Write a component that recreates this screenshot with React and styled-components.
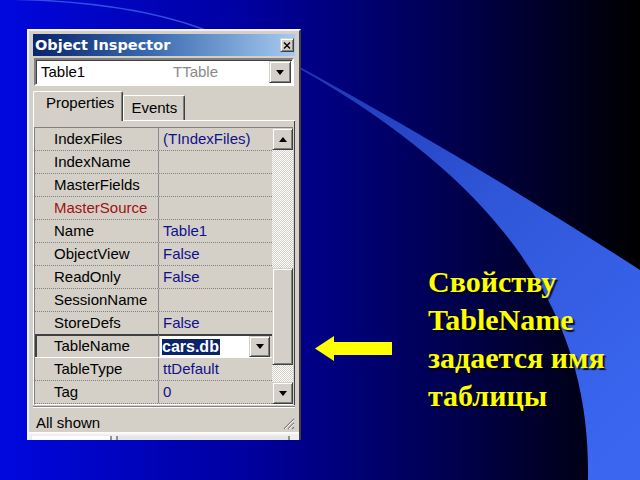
import React from 'react';
import styled, { createGlobalStyle } from 'styled-components';

const Global = createGlobalStyle`
  html, body { margin: 0; padding: 0; background: #000; }
  body { width: 640px; height: 480px; overflow: hidden; }
`;

const Slide = styled.div`
  position: relative;
  width: 640px;
  height: 480px;
  overflow: hidden;
  background: linear-gradient(to right, #0008de 0%, #00009c 40%, #000050 70%, #000000 100%);
  font-family: "Liberation Sans", Arial, sans-serif;
`;

const Backdrop = styled.svg`
  position: absolute;
  left: 0;
  top: 0;
`;

const Content = styled.div`
  position: relative;
  display: flex;
  align-items: flex-start;
  padding: 29px 0 0 27px;
  box-sizing: border-box;
  height: 100%;
`;

const Window = styled.div`
  width: 274px;
  height: 411px;
  box-sizing: border-box;
  flex-shrink: 0;
  background: #d4d0c8;
  border: 2px solid;
  border-color: #f4f4f4 #404040 #404040 #f4f4f4;
  border-bottom: none;
  padding: 3px 4px 0 4px;
  display: flex;
  flex-direction: column;
  overflow: hidden;
`;

const TitleBar = styled.div`
  height: 22px;
  flex-shrink: 0;
  display: flex;
  align-items: center;
  justify-content: space-between;
  padding: 0 1px 0 2px;
  background: linear-gradient(to right, #0a246a 0%, #3a6ab0 45%, #a6caf0 100%);
`;

const TitleText = styled.span`
  font-family: "DejaVu Sans", Verdana, sans-serif;
  font-weight: bold;
  font-size: 14.5px;
  color: #fff;
  white-space: nowrap;
`;

const RaisedBtn = styled.div`
  box-sizing: border-box;
  width: ${p => p.$w}px;
  height: ${p => p.$h}px;
  flex-shrink: 0;
  background: #d4d0c8;
  border: 1px solid;
  border-color: #d4d0c8 #404040 #404040 #d4d0c8;
  box-shadow: inset 1px 1px 0 #fff, inset -1px -1px 0 #808080;
  display: flex;
  align-items: center;
  justify-content: center;
`;

const Tri = styled.span`
  width: 0;
  height: 0;
  border-left: 4.5px solid transparent;
  border-right: 4.5px solid transparent;
  ${p => (p.$dir === 'up' ? 'border-bottom: 5px solid #000;' : 'border-top: 5px solid #000;')}
`;

const Combo = styled.div`
  margin: 2px 1px 0 1px;
  height: 28px;
  box-sizing: border-box;
  flex-shrink: 0;
  display: flex;
  align-items: stretch;
  background: #fff;
  border: 2px solid;
  border-color: #808080 #fff #fff #808080;
  box-shadow: inset 1px 1px 0 #404040;
  padding: 1px 1px 1px 0;
`;

const ComboText = styled.span`
  font-size: 15px;
  line-height: 22px;
  color: ${p => p.$muted ? '#8a8a8a' : '#000'};
  width: ${p => p.$w ? `${p.$w}px` : 'auto'};
  padding-left: ${p => p.$pl || 0}px;
  flex: ${p => p.$grow ? 1 : 'none'};
  white-space: nowrap;
`;

const TabStrip = styled.div`
  margin-top: 4px;
  height: 31px;
  box-sizing: border-box;
  flex-shrink: 0;
  display: flex;
  align-items: flex-end;
  border-bottom: 1px solid #fff;
`;

const Tab = styled.div`
  box-sizing: border-box;
  height: ${p => (p.$active ? 30 : 25)}px;
  margin-bottom: ${p => (p.$active ? -1 : 0)}px;
  padding: ${p => (p.$active ? '1px 8px 0 12px' : '2px 7px 0 7px')};
  background: #d4d0c8;
  border-top: 1px solid #fff;
  border-left: 1px solid #fff;
  border-right: 1px solid #404040;
  box-shadow: inset -1px 0 0 #808080;
  border-radius: 2px 2px 0 0;
  font-size: 15px;
  line-height: 20px;
  color: #000;
  white-space: nowrap;
`;

const TabPage = styled.div`
  border-left: 1px solid #fff;
  border-right: 1px solid #404040;
  padding: 6px 1px 0 0;
  flex-shrink: 0;
`;

const Grid = styled.div`
  display: grid;
  grid-template-columns: 1fr 21px;
  border-top: 1px solid #808080;
  border-left: 1px solid #808080;
  border-bottom: 1px solid #fff;
`;

const Rows = styled.div`
  display: flex;
  flex-direction: column;
`;

const Row = styled.div`
  display: grid;
  grid-template-columns: 124px 1fr;
  height: 23px;
  box-sizing: border-box;
  border-bottom: ${p => (p.$selected ? '1px solid #fff' : '1px dotted #808080')};
  box-shadow: ${p => (p.$selected ? '0 -1px 0 #404040, inset 0 1px 0 #404040, inset 2px 0 0 #404040' : 'none')};
`;

const NameCell = styled.div`
  border-right: 1px solid #8a8a8a;
  padding-left: 19px;
  font-size: 15px;
  line-height: 22px;
  color: ${p => (p.$red ? '#a01010' : '#000')};
  white-space: nowrap;
  overflow: hidden;
`;

const ValueCell = styled.div`
  padding-left: 4px;
  font-size: 15px;
  line-height: 22px;
  color: #10108a;
  white-space: nowrap;
  overflow: hidden;
`;

const EditorCell = styled.div`
  display: flex;
  align-items: stretch;
  padding: 1px 2px 0 1px;
`;

const EditField = styled.div`
  flex: 1;
  background: #fff;
  display: flex;
  align-items: center;
  padding-left: 2px;
`;

const Highlight = styled.span`
  background: #0a246a;
  color: #fff;
  font-weight: bold;
  font-size: 16px;
  line-height: 16px;
  padding: 0 1px 0 0;
`;

const Scroll = styled.div`
  display: flex;
  flex-direction: column;
`;

const Track = styled.div`
  height: ${p => p.$h}px;
  background-color: #ffffff;
  background-image: repeating-conic-gradient(#d4d0c8 0 25%, #ffffff 0 50%);
  background-size: 2px 2px;
`;

const StatusBar = styled.div`
  margin-top: 1px;
  height: 26px;
  box-sizing: border-box;
  flex-shrink: 0;
  border-top: 1px solid #808080;
  box-shadow: inset 0 1px 0 #fff;
  padding: 6px 0 0 3px;
  display: flex;
  justify-content: space-between;
  align-items: flex-start;
`;

const StatusText = styled.span`
  font-size: 15px;
  line-height: 20px;
  color: #000;
`;

const Grip = styled.svg`
  margin-top: 4px;
  flex-shrink: 0;
`;

const BottomStrip = styled.div`
  height: 8px;
  box-sizing: border-box;
  flex-shrink: 0;
  margin: 0 -4px;
  border-top: 2px solid #fafafa;
  background: #eeeeee;
  display: flex;
  padding-left: 3px;
`;

const StripPanel = styled.div`
  width: ${p => p.$w}px;
  box-sizing: border-box;
  background: ${p => p.$bg};
  border-right: 2px solid #909090;
  margin-top: 2px;
`;

const Arrow = styled.svg`
  margin: 307px 0 0 14px;
  flex-shrink: 0;
`;

const Caption = styled.div`
  margin: 234px 0 0 36px;
  font-family: "Liberation Serif", "Times New Roman", serif;
  font-weight: bold;
  font-size: 30px;
  line-height: 38px;
  color: #ffff00;
  text-shadow: 2px 2px 1px rgba(0, 0, 0, 0.85);
`;

const CaptionLine = styled.div`
  white-space: nowrap;
`;

const rows = [
  { name: 'IndexFiles', value: '(TIndexFiles)' },
  { name: 'IndexName' },
  { name: 'MasterFields' },
  { name: 'MasterSource', red: true },
  { name: 'Name', value: 'Table1' },
  { name: 'ObjectView', value: 'False' },
  { name: 'ReadOnly', value: 'False' },
  { name: 'SessionName' },
  { name: 'StoreDefs', value: 'False' },
  { name: 'TableName', value: 'cars.db', selected: true },
  { name: 'TableType', value: 'ttDefault' },
  { name: 'Tag', value: '0' },
];

export default function App() {
  return (
    <>
      <Global />
      <Slide>
        <Backdrop width="640" height="480" viewBox="0 0 640 480">
          <defs>
            <linearGradient id="band" x1="300" y1="68" x2="640" y2="420" gradientUnits="userSpaceOnUse">
              <stop offset="0" stopColor="#1e34b0" />
              <stop offset="0.45" stopColor="#2f56d8" />
              <stop offset="1" stopColor="#3a66f0" />
            </linearGradient>
          </defs>
          <path d="M 0 -1 C 80 0, 150 10, 200 28 C 240 42, 270 54, 300 67" stroke="#3c5ae6" strokeWidth="1.5" fill="none" opacity="0.85" />
          <path d="M 300 67 Q 470 160 640 270 L 640 480 L 588 480 C 590 360, 550 210, 300 69 Z" fill="url(#band)" />
        </Backdrop>
        <Content>
          <Window>
            <TitleBar>
              <TitleText>Object Inspector</TitleText>
              <RaisedBtn $w={14} $h={14}>
                <svg width="8" height="7" viewBox="0 0 8 7">
                  <path d="M1 0.5 L7 6.5 M7 0.5 L1 6.5" stroke="#000" strokeWidth="1.4" />
                </svg>
              </RaisedBtn>
            </TitleBar>
            <Combo>
              <ComboText $pl={5} $w={132}>Table1</ComboText>
              <ComboText $muted $grow>TTable</ComboText>
              <RaisedBtn $w={22} $h={22}>
                <Tri $dir="down" />
              </RaisedBtn>
            </Combo>
            <TabStrip>
              <Tab $active>Properties</Tab>
              <Tab>Events</Tab>
            </TabStrip>
            <TabPage>
              <Grid>
                <Rows>
                  {rows.map(r => (
                    <Row key={r.name} $selected={r.selected}>
                      <NameCell $red={r.red}>{r.name}</NameCell>
                      {r.selected ? (
                        <EditorCell>
                          <EditField>
                            <Highlight>{r.value}</Highlight>
                          </EditField>
                          <RaisedBtn $w={21} $h={21}>
                            <Tri $dir="down" />
                          </RaisedBtn>
                        </EditorCell>
                      ) : (
                        <ValueCell>{r.value || ''}</ValueCell>
                      )}
                    </Row>
                  ))}
                </Rows>
                <Scroll>
                  <RaisedBtn $w={21} $h={22}>
                    <Tri $dir="up" />
                  </RaisedBtn>
                  <Track $h={118} />
                  <RaisedBtn $w={21} $h={97} />
                  <Track $h={17} />
                  <RaisedBtn $w={21} $h={22}>
                    <Tri $dir="down" />
                  </RaisedBtn>
                </Scroll>
              </Grid>
            </TabPage>
            <StatusBar>
              <StatusText>All shown</StatusText>
              <Grip width="13" height="13" viewBox="0 0 13 13">
                <path d="M12 2 L2 12 M12 6 L6 12 M12 10 L10 12" stroke="#808080" strokeWidth="1.2" />
                <path d="M12 3 L3 12 M12 7 L7 12" stroke="#ffffff" strokeWidth="0.8" />
              </Grip>
            </StatusBar>
            <BottomStrip>
              <StripPanel $w={80} $bg="#ffffff" />
              <StripPanel $w={6} $bg="#eeeeee" />
              <StripPanel $w={172} $bg="#e6e6e6" />
            </BottomStrip>
          </Window>
          <Arrow width="77" height="25" viewBox="0 0 77 25">
            <polygon points="0,12.5 19,0 19,6 77,6 77,19 19,19 19,25" fill="#ffff00" />
          </Arrow>
          <Caption>
            <CaptionLine>Свойству</CaptionLine>
            <CaptionLine>TableName</CaptionLine>
            <CaptionLine>задается имя</CaptionLine>
            <CaptionLine>таблицы</CaptionLine>
          </Caption>
        </Content>
      </Slide>
    </>
  );
}
